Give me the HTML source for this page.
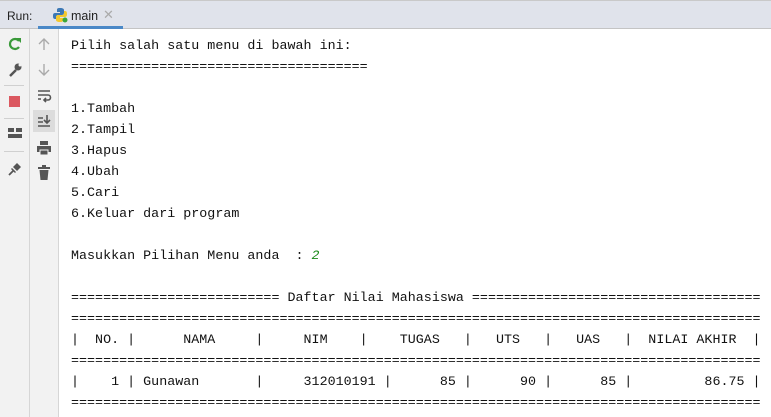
<!DOCTYPE html>
<html><head><style>
body{margin:0;width:771px;height:417px;overflow:hidden;background:#fff;position:relative;font-family:"Liberation Sans",sans-serif}
.top{position:absolute;left:0;top:0;width:771px;height:1px;background:#c9c9c9}
.hdr{position:absolute;left:0;top:1px;width:771px;height:27px;background:#e0e3eb;border-bottom:1px solid #c4c4c4}
.run{position:absolute;left:7px;top:8px;font-size:12px;color:#222}
.tab{position:absolute;left:38px;top:1px;width:85px;height:27px}
.tab .ul{position:absolute;left:0;bottom:0;width:85px;height:3px;background:#4a88c7}
.tab span{position:absolute;left:33px;top:7px;font-size:12.5px;color:#222}
.tab i{position:absolute;left:65px;top:5px;font-style:normal;color:#aaa;font-size:13px}
.c1{position:absolute;left:0;top:29px;width:29px;height:388px;background:#f2f2f2;border-right:1px solid #d6d6d6}
.c2{position:absolute;left:30px;top:29px;width:28px;height:388px;background:#f2f2f2;border-right:1px solid #d6d6d6}
.sep{position:absolute;left:4px;width:20px;height:1px;background:#d0d0d0}
pre{position:absolute;left:71px;top:36px;margin:0;font-family:"Liberation Mono",monospace;font-size:13.33px;letter-spacing:0.02px;line-height:21px;color:#111}
.g{color:#1a8a1a;font-style:italic}
svg{position:absolute}
</style></head><body>
<div class="top"></div>
<div class="hdr"><div class="run">Run:</div>
<div class="tab"><svg style="left:14px;top:5px" width="16" height="16" viewBox="0 0 16 16"><path d="M8 1c-3 0-3 1-3 2v2h3v1H3C1 6 1 8 1 9s0 3 2 3h1v-2c0-1 1-2 2-2h4c1 0 2-1 2-2V3c0-1-1-2-4-2z" fill="#3c78b5"/><path d="M8 15c3 0 3-1 3-2v-2H8v-1h5c2 0 2-2 2-3s0-3-2-3h-1v2c0 1-1 2-2 2H6c-1 0-2 1-2 2v3c0 1 1 2 4 2z" fill="#f3c82e"/><circle cx="13" cy="13" r="2.5" fill="#3aa63a"/></svg><span>main</span><i>✕</i><div class="ul"></div></div></div>
<div class="c1">
<svg style="left:7px;top:7px" width="16" height="16"><path d="M12 5A5 5 0 1 0 12 11" stroke="#3a9a3a" stroke-width="2.2" fill="none"/><path d="M9 2l5 0 0 5z" fill="#3a9a3a"/></svg>
<svg style="left:7px;top:33px" width="16" height="16"><path d="M3 14L9 8" stroke="#555" stroke-width="2.5"/><circle cx="11" cy="5" r="3.5" fill="#555"/><circle cx="13" cy="3" r="1.5" fill="#f2f2f2"/></svg>
<div class="sep" style="top:56px"></div>
<div style="position:absolute;left:9px;top:67px;width:11px;height:11px;background:#db5860"></div>
<div class="sep" style="top:89px"></div>
<svg style="left:7px;top:98px" width="16" height="12"><rect x="1" y="1" width="6" height="4" fill="#555"/><rect x="9" y="1" width="6" height="4" fill="#555"/><rect x="1" y="7" width="14" height="4" fill="#555"/></svg>
<div class="sep" style="top:122px"></div>
<svg style="left:7px;top:132px" width="16" height="16"><path d="M2 14L7 9" stroke="#555" stroke-width="1.8"/><path d="M6 6L10 2 14 6 10 10z M4 8l4 4 1-1-4-4z" fill="#555"/></svg>
</div>
<div class="c2">
<svg style="left:7px;top:8px" width="14" height="14"><path d="M7 13V2M2 7l5-5 5 5" stroke="#aaa" stroke-width="1.4" fill="none"/></svg>
<svg style="left:7px;top:34px" width="14" height="14"><path d="M7 1v11M2 7l5 5 5-5" stroke="#aaa" stroke-width="1.4" fill="none"/></svg>
<svg style="left:6px;top:59px" width="16" height="16"><path d="M2 3h12M2 7h10a2.5 2.5 0 0 1 0 5H8M10 10l-2 2 2 2M2 11h3" stroke="#555" stroke-width="1.6" fill="none"/></svg>
<div style="position:absolute;left:3px;top:81px;width:22px;height:22px;background:#dcdcdc"></div>
<svg style="left:6px;top:84px" width="16" height="16"><path d="M2 5h5M2 9h5M2 13h12M11 2v8M8 7l3 3 3-3" stroke="#555" stroke-width="1.6" fill="none"/></svg>
<svg style="left:6px;top:111px" width="16" height="16"><rect x="4" y="1" width="8" height="4" fill="#555"/><rect x="1" y="6" width="14" height="6" fill="#555"/><rect x="4" y="10" width="8" height="5" fill="#555" stroke="#f2f2f2"/></svg>
<svg style="left:7px;top:136px" width="14" height="16"><rect x="1" y="2" width="12" height="2" fill="#555"/><rect x="5" y="0" width="4" height="2" fill="#555"/><path d="M2.5 5h9l-1 10h-7z" fill="#555"/></svg>
</div>
<pre>Pilih salah satu menu di bawah ini:
=====================================

1.Tambah
2.Tampil
3.Hapus
4.Ubah
5.Cari
6.Keluar dari program

Masukkan Pilihan Menu anda  : <span class="g">2</span>

========================== Daftar Nilai Mahasiswa ====================================
======================================================================================
|  NO. |      NAMA     |     NIM    |    TUGAS   |   UTS   |   UAS   |  NILAI AKHIR  |
======================================================================================
|    1 | Gunawan       |     312010191 |      85 |      90 |      85 |         86.75 |
======================================================================================</pre>
</body></html>
